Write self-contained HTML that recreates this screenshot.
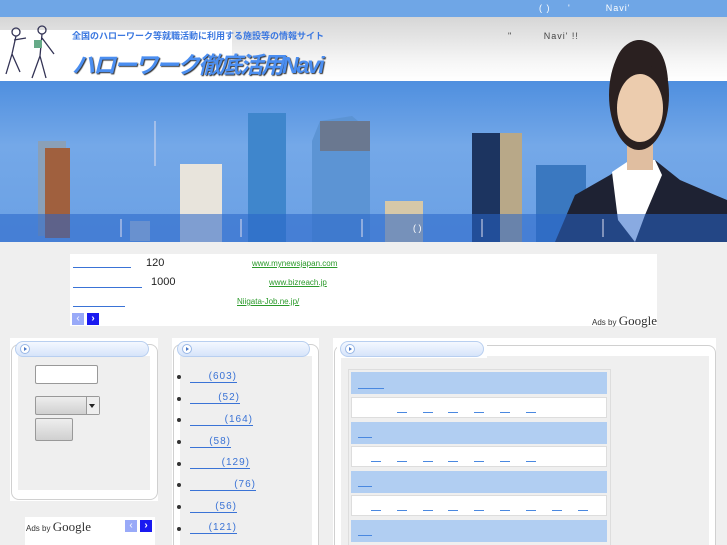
<!DOCTYPE html>
<html><head><meta charset="utf-8"><style>
*{margin:0;padding:0;box-sizing:border-box}
html,body{width:727px;height:545px;overflow:hidden}
body{background:#efefef;font-family:"Liberation Sans","Noto Sans CJK JP",sans-serif;position:relative}
.a{position:absolute}
.u{position:absolute;height:1px;background:#3a73d6}
.pill{position:absolute;height:16px;border:1px solid #b8cff0;border-radius:8px;background:linear-gradient(#f4f8ff,#d6e4fa)}
.pill i{position:absolute;left:4px;top:2px;width:10px;height:10px;border-radius:50%;background:#fff;border:1px solid #9ab8e6}
.pill i:after{content:"";position:absolute;left:3px;top:2px;border-left:3px solid #4a78c8;border-top:2px solid transparent;border-bottom:2px solid transparent}
.box{position:absolute;background:#fff}
.frame{position:absolute;border:1px solid #d0d0d0;border-radius:8px;background:#fff}
.inner{position:absolute;background:#efefef}
.lk{position:absolute;font-size:10px;color:#3a73d6;letter-spacing:1px;border-bottom:1px solid #3a73d6;line-height:11px;text-align:right}
.dot{position:absolute;width:4px;height:4px;border-radius:50%;background:#333}
.rb{position:absolute;left:351px;width:256px;height:22px;background:#b1cef2}
.rw{position:absolute;left:351px;width:256px;height:21px;background:#fff;border:1px solid #ddd}
.d{position:absolute;width:10px;height:1px;background:#4a88e0}
</style></head><body>
<div class="a" style="left:0;top:0;width:727px;height:17px;background:#6fa6e6"></div>
<div class="a" style="left:539px;top:3px;font-size:9px;color:#fff;letter-spacing:1px">( )&nbsp;&nbsp;&nbsp;&nbsp;&nbsp;'&nbsp;&nbsp;&nbsp;&nbsp;&nbsp;&nbsp;&nbsp;&nbsp;&nbsp;&nbsp;Navi'</div>
<div class="a" style="left:0;top:17px;width:727px;height:64px;background:linear-gradient(#d6d6d6,#e8e8e8 40%,#f6f6f6 70%,#fff)"></div>
<div class="a" style="left:0;top:30px;width:232px;height:51px;background:#fff"></div>
<div class="a" style="left:508px;top:31px;font-size:9px;color:#444;letter-spacing:1px">"&nbsp;&nbsp;&nbsp;&nbsp;&nbsp;&nbsp;&nbsp;&nbsp;&nbsp;Navi' !!</div>
<svg class="a" style="left:2px;top:24px" width="60" height="58"><g fill="none" stroke="#335" stroke-width="1.3"><circle cx="14" cy="8" r="4"/><path d="M14 12 L10 30 L4 50 M10 30 L18 48 M12 16 L24 14"/><circle cx="40" cy="6" r="4"/><path d="M40 10 L38 32 L30 54 M38 32 L44 54 M40 14 L52 30"/></g><rect x="32" y="16" width="8" height="8" fill="#6a8"/></svg>
<div class="a" style="left:72px;top:29px;font-size:9px;font-weight:bold;color:#3b78e0">全国のハローワーク等就職活動に利用する施設等の情報サイト</div>
<div class="a" style="left:72px;top:46px;font-size:23px;font-weight:bold;color:#4b8ef0;letter-spacing:-2px;text-shadow:1px 1px 1px #333;font-style:italic">ハローワーク徹底活用Navi</div>
<!-- banner -->
<div class="a" style="left:0;top:81px;width:727px;height:161px;background:linear-gradient(#4f8fdf,#74a8e8 40%,#6aa0e4);overflow:hidden">
<svg width="727" height="161">
<rect x="38" y="60" width="28" height="95" fill="#8aa0b8"/><rect x="45" y="67" width="25" height="90" fill="#a0603e"/>
<rect x="130" y="140" width="20" height="20" fill="#b8c8d8"/>
<rect x="180" y="83" width="42" height="78" fill="#e8e4dc"/><line x1="155" y1="40" x2="155" y2="85" stroke="#dde"/>
<rect x="248" y="32" width="38" height="129" fill="#3f86cc"/>
<polygon points="312,60 320,40 352,35 370,50 370,161 312,161" fill="#5c94d4"/><rect x="320" y="40" width="50" height="30" fill="#6a7890"/>
<rect x="385" y="120" width="38" height="41" fill="#d6c8a8"/>
<rect x="472" y="52" width="50" height="109" fill="#1c3460"/><rect x="500" y="52" width="22" height="109" fill="#b8a888"/>
<rect x="536" y="84" width="50" height="77" fill="#3a78c0"/>
</svg></div>
<!-- woman, page coords -->
<svg class="a" style="left:0;top:0" width="727" height="242">
<path d="M555 242 L575 195 L610 175 L630 160 L655 160 L680 180 L715 195 L727 200 L727 242Z" fill="#1e2233"/>
<path d="M612 172 L630 160 L655 160 L662 175 L645 215 L635 242 L618 220Z" fill="#fff"/>
<rect x="627" y="135" width="26" height="35" fill="#e0bea0"/>
<ellipse cx="639" cy="95" rx="30" ry="55" fill="#2a2020"/>
<ellipse cx="640" cy="108" rx="23" ry="34" fill="#ecccae"/>
<path d="M612 80 Q615 42 640 40 Q665 42 668 80 L662 70 Q640 60 618 70Z" fill="#2a2020"/>
<rect x="0" y="214" width="727" height="28" fill="rgba(40,100,200,.55)"/>
<g stroke="#dde" stroke-width="1"><line x1="121" y1="219" x2="121" y2="237"/><line x1="241" y1="219" x2="241" y2="237"/><line x1="362" y1="219" x2="362" y2="237"/><line x1="482" y1="219" x2="482" y2="237"/><line x1="603" y1="219" x2="603" y2="237"/></g>
<text x="413" y="231" font-size="9" fill="#fff" font-family="Liberation Sans">( )</text>
</svg>
<!-- ad box -->
<div class="box" style="left:70px;top:254px;width:587px;height:72px"></div>
<div class="u" style="left:73px;top:267px;width:58px"></div>
<div class="a" style="left:146px;top:257px;font-size:11px;color:#222">120</div>
<div class="a" style="left:252px;top:259px;font-size:8px;color:#2a9a2a;text-decoration:underline">www.mynewsjapan.com</div>
<div class="u" style="left:73px;top:287px;width:69px"></div>
<div class="a" style="left:151px;top:276px;font-size:11px;color:#222">1000</div>
<div class="a" style="left:269px;top:278px;font-size:8px;color:#2a9a2a;text-decoration:underline">www.bizreach.jp</div>
<div class="u" style="left:73px;top:306px;width:52px"></div>
<div class="a" style="left:237px;top:297px;font-size:8px;color:#2a9a2a;text-decoration:underline">Niigata-Job.ne.jp/</div>
<div class="a" style="left:72px;top:313px;width:12px;height:12px;background:#99aaf8;color:#fff;font-size:10px;text-align:center;line-height:12px">‹</div>
<div class="a" style="left:87px;top:313px;width:12px;height:12px;background:#1a1af0;color:#fff;font-size:10px;text-align:center;line-height:12px;font-weight:bold">›</div>
<div class="a" style="left:592px;top:313px;font-size:8px;color:#333">Ads by <span style="font-family:'Liberation Serif',serif;font-size:13px">Google</span></div>
<!-- left panel -->
<div class="box" style="left:10px;top:338px;width:148px;height:163px"></div>
<div class="frame" style="left:11px;top:344px;width:147px;height:156px"></div>
<div class="inner" style="left:18px;top:356px;width:132px;height:134px"></div>
<div class="pill" style="left:15px;top:341px;width:134px"><i></i></div>
<div class="a" style="left:35px;top:365px;width:63px;height:19px;background:#fff;border:1px solid #999;border-radius:2px"></div>
<div class="a" style="left:35px;top:396px;width:65px;height:19px;background:linear-gradient(#eee,#d0d0d0);border:1px solid #999;border-radius:2px"></div>
<div class="a" style="left:86px;top:397px;width:13px;height:17px;border-left:1px solid #999;background:#eee"></div>
<div class="a" style="left:89px;top:404px;border-top:4px solid #222;border-left:3px solid transparent;border-right:3px solid transparent"></div>
<div class="a" style="left:35px;top:418px;width:38px;height:23px;background:linear-gradient(#eee,#d0d0d0);border:1px solid #999;border-radius:2px"></div>
<div class="box" style="left:25px;top:517px;width:130px;height:28px"></div>
<div class="a" style="left:26px;top:519px;font-size:8px;color:#333">Ads by <span style="font-family:'Liberation Serif',serif;font-size:13px">Google</span></div>
<div class="a" style="left:125px;top:520px;width:12px;height:12px;background:#99aaf8;color:#fff;font-size:10px;text-align:center;line-height:12px">‹</div>
<div class="a" style="left:140px;top:520px;width:12px;height:12px;background:#1a1af0;color:#fff;font-size:10px;text-align:center;line-height:12px;font-weight:bold">›</div>
<!-- middle panel -->
<div class="box" style="left:172px;top:338px;width:147px;height:207px"></div>
<div class="frame" style="left:173px;top:344px;width:146px;height:210px"></div>
<div class="inner" style="left:180px;top:356px;width:132px;height:189px"></div>
<div class="pill" style="left:177px;top:341px;width:133px"><i></i></div>
<div class="dot" style="left:177px;top:375px"></div><div class="lk" style="left:190px;top:371px;width:47px">(603)</div>
<div class="dot" style="left:177px;top:397px"></div><div class="lk" style="left:190px;top:392px;width:50px">(52)</div>
<div class="dot" style="left:177px;top:418px"></div><div class="lk" style="left:190px;top:414px;width:63px">(164)</div>
<div class="dot" style="left:177px;top:440px"></div><div class="lk" style="left:190px;top:436px;width:41px">(58)</div>
<div class="dot" style="left:177px;top:462px"></div><div class="lk" style="left:190px;top:457px;width:60px">(129)</div>
<div class="dot" style="left:177px;top:483px"></div><div class="lk" style="left:190px;top:479px;width:66px">(76)</div>
<div class="dot" style="left:177px;top:505px"></div><div class="lk" style="left:190px;top:501px;width:47px">(56)</div>
<div class="dot" style="left:177px;top:527px"></div><div class="lk" style="left:190px;top:522px;width:47px">(121)</div>
<!-- right panel -->
<div class="box" style="left:333px;top:338px;width:383px;height:207px"></div>
<div class="frame" style="left:334px;top:345px;width:382px;height:210px"></div>
<div class="inner" style="left:341px;top:356px;width:368px;height:189px"></div>
<div class="box" style="left:337px;top:340px;width:150px;height:18px"></div>
<div class="pill" style="left:340px;top:341px;width:144px"><i></i></div>
<div class="a" style="left:348px;top:369px;width:263px;height:180px;border:1px solid #ddd;background:#efefef"></div>
<div class="rb" style="top:372px"></div><div class="u" style="left:358px;top:388px;width:26px;background:#4a88e0"></div>
<div class="rw" style="top:397px"></div>
<div class="rb" style="top:422px"></div><div class="u" style="left:358px;top:437px;width:14px;background:#4a88e0"></div>
<div class="rw" style="top:446px"></div>
<div class="rb" style="top:471px"></div><div class="u" style="left:358px;top:486px;width:14px;background:#4a88e0"></div>
<div class="rw" style="top:495px"></div>
<div class="rb" style="top:520px"></div><div class="u" style="left:358px;top:535px;width:14px;background:#4a88e0"></div>
<div class="d" style="left:397px;top:412px"></div><div class="d" style="left:423px;top:412px"></div><div class="d" style="left:448px;top:412px"></div><div class="d" style="left:474px;top:412px"></div><div class="d" style="left:500px;top:412px"></div><div class="d" style="left:526px;top:412px"></div>
<div class="d" style="left:371px;top:461px"></div><div class="d" style="left:397px;top:461px"></div><div class="d" style="left:423px;top:461px"></div><div class="d" style="left:448px;top:461px"></div><div class="d" style="left:474px;top:461px"></div><div class="d" style="left:500px;top:461px"></div><div class="d" style="left:526px;top:461px"></div>
<div class="d" style="left:371px;top:510px"></div><div class="d" style="left:397px;top:510px"></div><div class="d" style="left:423px;top:510px"></div><div class="d" style="left:448px;top:510px"></div><div class="d" style="left:474px;top:510px"></div><div class="d" style="left:500px;top:510px"></div><div class="d" style="left:526px;top:510px"></div><div class="d" style="left:552px;top:510px"></div><div class="d" style="left:578px;top:510px"></div>
</body></html>
